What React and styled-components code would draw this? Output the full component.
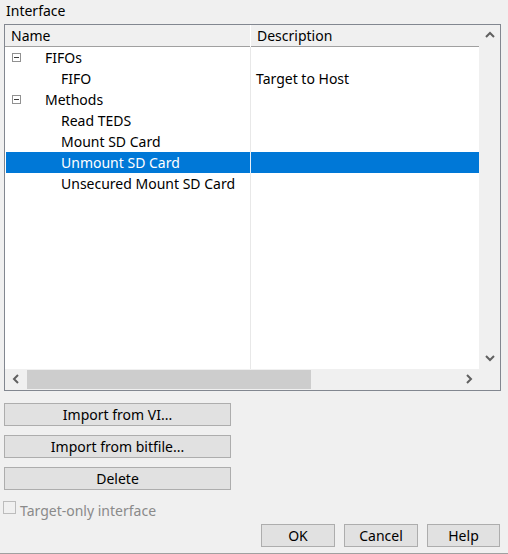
import React from 'react';
import styled, { createGlobalStyle } from 'styled-components';

const GlobalStyle = createGlobalStyle`
  html, body {
    margin: 0;
    padding: 0;
    background: #f0f0f0;
  }
  body {
    font-family: "Noto Sans", "Open Sans", sans-serif;
    font-size: 14px;
    color: #000;
  }
`;

const Dialog = styled.div`
  width: 508px;
  height: 554px;
  box-sizing: border-box;
  border-bottom: 1px solid #a0a0a0;
  display: flex;
  flex-direction: column;
`;

const Title = styled.div`
  height: 24px;
  line-height: 22px;
  padding-left: 6px;
`;

const Panel = styled.div`
  margin-left: 4px;
  width: 497px;
  height: 367px;
  box-sizing: border-box;
  border: 1px solid #828790;
  display: grid;
  grid-template-columns: 474px 21px;
  grid-template-rows: 344px 21px;
  background: #f0f0f0;
`;

const List = styled.div`
  background: #fff;
  display: flex;
  flex-direction: column;
  overflow: hidden;
`;

const Header = styled.div`
  display: grid;
  grid-template-columns: 246px 1fr;
  height: 21px;
  background: #f0f0f0;
  border-bottom: 1px solid #a0a0a0;
`;

const HeaderCell = styled.div`
  padding-left: 6px;
  line-height: 22px;
  border-right: ${p => (p.$last ? 'none' : '1px solid #ffffff')};
`;

const Body = styled.div`
  flex: 1;
  display: flex;
  flex-direction: column;
  padding-left: 1px;
`;

const Row = styled.div`
  display: grid;
  grid-template-columns: 245px 1fr;
  height: 21px;
  background: ${p => (p.$selected ? '#0078d7' : 'transparent')};
  color: ${p => (p.$selected ? '#fff' : '#000')};
`;

const NameCell = styled.div`
  display: flex;
  align-items: center;
  border-right: 1px solid ${p => (p.$selected ? '#e8f0f8' : '#e8e8e8')};
  white-space: nowrap;
`;

const DescCell = styled.div`
  padding-left: 5px;
  line-height: 21px;
  white-space: nowrap;
`;

const Filler = styled.div`
  flex: 1;
  display: grid;
  grid-template-columns: 245px 1fr;
`;

const Expander = styled.span`
  box-sizing: border-box;
  width: 9px;
  height: 9px;
  margin-left: 6px;
  border: 1px solid #919191;
  display: flex;
  align-items: center;
  justify-content: center;
  flex-shrink: 0;
  &::after {
    content: '';
    width: 5px;
    height: 1px;
    background: #3c3c3c;
  }
`;

const Label = styled.span`
  padding-left: ${p => p.$indent}px;
`;

const VScroll = styled.div`
  display: flex;
  flex-direction: column;
  justify-content: space-between;
  align-items: center;
  padding: 6px 0 7px;
`;

const HScroll = styled.div`
  display: grid;
  grid-template-columns: 22px 284px 1fr 21px;
  align-items: center;
  padding-bottom: 1px;
`;

const Thumb = styled.div`
  height: 19px;
  background: #cdcdcd;
`;

const ArrowBox = styled.div`
  display: flex;
  align-items: center;
  justify-content: center;
`;

const Corner = styled.div`
  background: #f0f0f0;
`;

const SideButtons = styled.div`
  display: flex;
  flex-direction: column;
  gap: 9px;
  margin: 12px 0 0 4px;
`;

const Button = styled.button`
  box-sizing: border-box;
  width: ${p => p.$w}px;
  height: 23px;
  padding: 0;
  background: #e1e1e1;
  border: 1px solid #adadad;
  font-family: inherit;
  font-size: 14px;
  color: #000;
  line-height: 20px;
`;

const CheckRow = styled.label`
  display: flex;
  align-items: flex-start;
  margin: 10px 0 0 3px;
  color: #8a8a8a;
  height: 18px;
`;

const Box = styled.span`
  box-sizing: border-box;
  width: 13px;
  height: 13px;
  margin-top: 1px;
  border: 1px solid #bcbcbc;
  background: #f0f0f0;
  margin-right: 4px;
`;

const CheckText = styled.span`
  padding-top: 2px;
  line-height: 18px;
`;

const Footer = styled.div`
  display: flex;
  justify-content: flex-end;
  gap: 9px;
  margin: 6px 8px 0 0;
`;

const Chevron = ({ dir }) => {
  const paths = {
    up: 'M1 6 L5 2 L9 6',
    down: 'M1 2 L5 6 L9 2',
    left: 'M6 1 L2 5 L6 9',
    right: 'M2 1 L6 5 L2 9',
  };
  const vertical = dir === 'up' || dir === 'down';
  return (
    <svg width={vertical ? 10 : 8} height={vertical ? 8 : 10} viewBox={vertical ? '0 0 10 8' : '0 0 8 10'}>
      <path d={paths[dir]} fill="none" stroke="#606060" strokeWidth="2" />
    </svg>
  );
};

const rows = [
  { name: 'FIFOs', group: true },
  { name: 'FIFO', desc: 'Target to Host' },
  { name: 'Methods', group: true },
  { name: 'Read TEDS' },
  { name: 'Mount SD Card' },
  { name: 'Unmount SD Card', selected: true },
  { name: 'Unsecured Mount SD Card' },
];

export default function App() {
  return (
    <>
      <GlobalStyle />
      <Dialog>
        <Title>Interface</Title>
        <Panel>
          <List>
            <Header>
              <HeaderCell>Name</HeaderCell>
              <HeaderCell $last>Description</HeaderCell>
            </Header>
            <Body>
              {rows.map(r => (
                <Row key={r.name} $selected={r.selected}>
                  <NameCell $selected={r.selected}>
                    {r.group && <Expander />}
                    <Label $indent={r.group ? 24 : 55}>{r.name}</Label>
                  </NameCell>
                  <DescCell>{r.desc}</DescCell>
                </Row>
              ))}
              <Filler>
                <NameCell />
                <div />
              </Filler>
            </Body>
          </List>
          <VScroll>
            <Chevron dir="up" />
            <Chevron dir="down" />
          </VScroll>
          <HScroll>
            <ArrowBox><Chevron dir="left" /></ArrowBox>
            <Thumb />
            <div />
            <ArrowBox><Chevron dir="right" /></ArrowBox>
          </HScroll>
          <Corner />
        </Panel>
        <SideButtons>
          <Button $w={227}>Import from VI...</Button>
          <Button $w={227}>Import from bitfile...</Button>
          <Button $w={227}>Delete</Button>
        </SideButtons>
        <CheckRow>
          <Box />
          <CheckText>Target-only interface</CheckText>
        </CheckRow>
        <Footer>
          <Button $w={74}>OK</Button>
          <Button $w={74}>Cancel</Button>
          <Button $w={73}>Help</Button>
        </Footer>
      </Dialog>
    </>
  );
}
